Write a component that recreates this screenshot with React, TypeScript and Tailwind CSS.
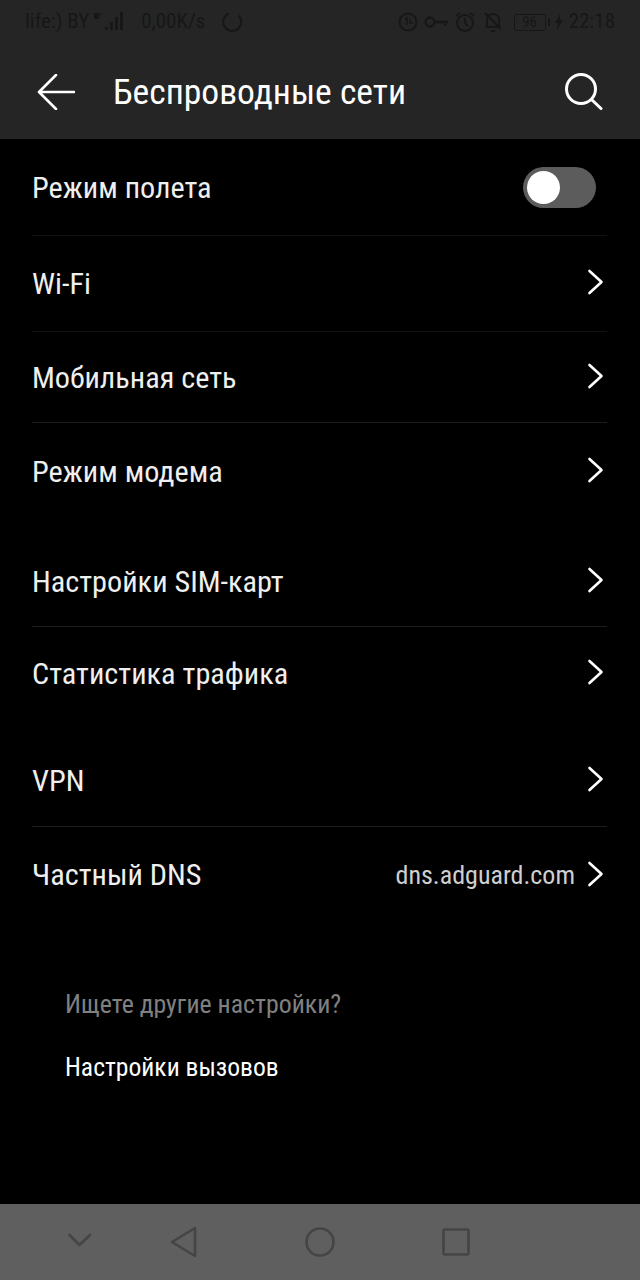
import React from "react";

const Chevron = () => (
  <svg width="18" height="26" viewBox="0 0 18 26" className="mb-[3px]" fill="none" stroke="#fff" strokeWidth="2.6" strokeLinecap="round" strokeLinejoin="round">
    <path d="M3.5 2 L15.5 13 L3.5 24" />
  </svg>
);

const StatusBar = () => (
  <div className="h-[44px] flex items-center justify-between pl-[25px] pr-[25px] text-[21px] text-[#171717] [font-stretch:87%]">
    <div className="flex items-center">
      <span>life:) BY</span>
      <svg width="36" height="24" viewBox="0 0 36 24" className="ml-[3px]" fill="#171717">
        <rect x="2" y="3" width="5" height="6" />
        <circle cx="9" cy="4" r="1" />
        <rect x="13" y="17" width="3" height="3" />
        <rect x="18" y="12" width="3" height="8" />
        <rect x="23" y="7" width="3" height="13" />
        <rect x="28" y="2" width="3" height="18" />
      </svg>
      <span className="ml-[13px]">0,00K/s</span>
      <svg width="24" height="24" viewBox="0 0 24 24" className="ml-[15px]" fill="none" stroke="#171717" strokeWidth="2">
        <path d="M9 3.5 A9 9 0 1 0 18.5 5.5" />
      </svg>
    </div>
    <div className="flex items-center">
      <svg width="20" height="20" viewBox="0 0 20 20" fill="none" stroke="#171717" strokeWidth="2">
        <circle cx="10" cy="10" r="8.5" />
        <path d="M7 7 L9 6 V13 M12 7 V11 H15" strokeWidth="1.6" />
      </svg>
      <svg width="25" height="14" viewBox="0 0 25 14" className="ml-[6px]" fill="none" stroke="#171717" strokeWidth="2.4">
        <circle cx="6" cy="7" r="4.5" />
        <path d="M11 7 H24 M21 7 V11" />
      </svg>
      <svg width="22" height="22" viewBox="0 0 22 22" className="ml-[5px]" fill="none" stroke="#171717" strokeWidth="2">
        <circle cx="11" cy="12" r="8" />
        <path d="M11 7 V12 L14 15 M2 5 L6 2 M20 5 L16 2" />
      </svg>
      <svg width="20" height="22" viewBox="0 0 20 22" className="ml-[7px]" fill="none" stroke="#171717" strokeWidth="2">
        <path d="M4 16 V9 C4 5 7 3 10 3 C13 3 16 5 16 9 V16 H2 H18 M8 20 H12 M2 2 L18 18" />
      </svg>
      <div className="ml-[11px] h-[17px] w-[32px] border border-[#171717] rounded-[2px] flex items-center justify-center text-[15px] leading-none">96</div>
      <div className="ml-[2px] h-[8px] w-[2px] bg-[#171717]" />
      <svg width="8" height="16" viewBox="0 0 8 16" className="ml-[5px]" fill="#171717">
        <path d="M5 0 L0 9 H3 L2 16 L8 6 H5 Z" />
      </svg>
      <span className="ml-[6px]">22:18</span>
    </div>
  </div>
);

const Row = ({ label, right, height, divider, labelClass, children }: { label: string; right?: string; height: string; divider?: string; labelClass?: string; children?: React.ReactNode }) => (
  <div className={`${height} ${divider ?? ""} flex items-center justify-between`}>
    <span className={`text-[30.25px] text-[#efefef] [font-stretch:87%] ${labelClass ?? ""}`}>{label}</span>
    <div className="flex items-center pr-[3px]">
      {right && <span className="text-[26px] text-[#cfcfcf] mr-[11px] [font-stretch:87%]">{right}</span>}
      {children ?? <Chevron />}
    </div>
  </div>
);

export default function App() {
  return (
    <div className="w-[640px] h-[1280px] bg-black flex flex-col overflow-hidden" style={{ fontFamily: "Roboto, sans-serif" }}>
      <div className="h-[139px] bg-[#252525] flex flex-col">
        <StatusBar />
        <div className="flex-1 flex items-center pl-[37px] pr-[37px]">
          <svg width="38" height="36" viewBox="0 0 38 36" fill="none" stroke="#fff" strokeWidth="2.6" strokeLinecap="round" strokeLinejoin="round">
            <path d="M37 18 H2 M19 1 L2 18 L19 35" />
          </svg>
          <span className="ml-[38px] mt-[3px] text-[35.6px] text-white flex-1 [font-stretch:87%]">Беспроводные сети</span>
          <svg width="38" height="38" viewBox="0 0 38 38" fill="none" stroke="#fff" strokeWidth="3" strokeLinecap="round">
            <circle cx="16" cy="16" r="14.5" />
            <path d="M27 27 L36 35.5" />
          </svg>
        </div>
      </div>

      <div className="flex-1 pl-[32px] pr-[33px]">
        <Row label="Режим полета" labelClass="mt-[2px]" height="h-[97px]" divider="border-b border-[#101010]">
          <div className="w-[73px] h-[41px] rounded-full bg-[#5c5c5c] flex items-center pl-[4px] mr-[8px]">
            <div className="w-[33px] h-[33px] rounded-full bg-white" />
          </div>
        </Row>
        <Row label="Wi-Fi" height="h-[96px]" divider="border-b border-[#101010]" />
        <Row label="Мобильная сеть" labelClass="mt-[2px]" height="h-[91px]" divider="border-b border-[#1c1c1c]" />
        <Row label="Режим модема" height="h-[97px]" />
        <div className="h-[17px]" />
        <Row label="Настройки SIM-карт" height="h-[90px]" divider="border-b border-[#1c1c1c]" />
        <Row label="Статистика трафика" height="h-[93px]" />
        <div className="h-[16px]" />
        <Row label="VPN" labelClass="mt-[2px]" height="h-[91px]" divider="border-b border-[#1c1c1c] pb-[2px]" />
        <Row label="Частный DNS" right="dns.adguard.com" height="h-[96px]" />
        <div className="pl-[33px] pt-[61px]">
          <div className="text-[25.8px] text-[#808080] leading-[40px] [font-stretch:87%]">Ищете другие настройки?</div>
          <div className="text-[25.6px] text-white leading-[40px] mt-[23px] [font-stretch:87%]">Настройки вызовов</div>
        </div>
      </div>

      <div className="h-[76px] bg-[#5f5f5f] flex items-center pl-[68px]">
        <svg width="28" height="18" viewBox="0 0 28 18" fill="none" stroke="#454545" strokeWidth="2.6" strokeLinecap="round" strokeLinejoin="round">
          <path d="M1.5 2 L11.5 12 L22 2" />
        </svg>
        <svg width="28" height="32" viewBox="0 0 28 32" className="ml-[74px]" fill="none" stroke="#454545" strokeWidth="2.6" strokeLinejoin="round">
          <path d="M2 16 L25 2 V30 Z" />
        </svg>
        <svg width="30" height="30" viewBox="0 0 30 30" className="ml-[107px]" fill="none" stroke="#454545" strokeWidth="2.6">
          <circle cx="15" cy="15" r="13.5" />
        </svg>
        <svg width="28" height="28" viewBox="0 0 28 28" className="ml-[107px]" fill="none" stroke="#454545" strokeWidth="2.6" strokeLinejoin="round">
          <rect x="1.5" y="1.5" width="25" height="25" rx="1.5" />
        </svg>
      </div>
    </div>
  );
}
